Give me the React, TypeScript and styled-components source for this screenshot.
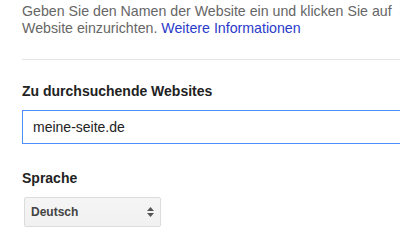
import React from 'react';
import styled, { createGlobalStyle } from 'styled-components';

const GlobalStyle = createGlobalStyle`
  html, body {
    margin: 0;
    padding: 0;
    background: #fff;
    overflow: hidden;
  }
  body {
    font-family: Arial, "Liberation Sans", sans-serif;
  }
`;

const Page = styled.div`
  width: 400px;
  height: 250px;
  overflow: hidden;
  padding-left: 22px;
  box-sizing: border-box;
`;

const Intro = styled.p`
  margin: 0;
  padding-top: 3px;
  width: 400px;
  font-size: 14.2px;
  line-height: 17px;
  color: #666;
  white-space: nowrap;
`;

const Link = styled.a`
  color: #2a3acb;
  text-decoration: none;
`;

const Divider = styled.hr`
  margin: 22px 0 0;
  border: 0;
  border-top: 1px solid #e5e5e5;
  width: 400px;
`;

const Field = styled.div<{ $top: number }>`
  display: flex;
  flex-direction: column;
  align-items: flex-start;
  padding-top: ${(p) => p.$top}px;
`;

const Label = styled.label`
  font-size: 14px;
  line-height: 16px;
  font-weight: bold;
  color: #222;
  margin-bottom: 11px;
`;

const TextInput = styled.div`
  width: 400px;
  height: 34px;
  box-sizing: border-box;
  border: 1px solid #4d90fe;
  display: flex;
  align-items: center;
  padding-left: 10px;
  font-size: 14px;
  color: #222;
`;

const Select = styled.div`
  margin-left: 2px;
  width: 137px;
  height: 30px;
  box-sizing: border-box;
  border: 1px solid #dcdcdc;
  border-radius: 2px;
  background: linear-gradient(#f5f5f5, #f1f1f1);
  display: flex;
  align-items: center;
  justify-content: space-between;
  padding: 0 6px 0 6px;
  font-size: 12px;
  font-weight: bold;
  color: #444;
`;

const Arrows = () => (
  <svg width="7" height="10" viewBox="0 0 7 10">
    <path d="M3.5 0 L7 4 L0 4 Z" fill="#555" />
    <path d="M3.5 10 L7 6 L0 6 Z" fill="#555" />
  </svg>
);

export default function App() {
  return (
    <>
      <GlobalStyle />
      <Page>
        <Intro>
          Geben Sie den Namen der Website ein und klicken Sie auf
          <br />
          Website einzurichten. <Link href="#">Weitere Informationen</Link>
        </Intro>
        <Divider />
        <Field $top={23}>
          <Label>Zu durchsuchende Websites</Label>
          <TextInput>meine-seite.de</TextInput>
        </Field>
        <Field $top={26}>
          <Label>Sprache</Label>
          <Select>
            <span>Deutsch</span>
            <Arrows />
          </Select>
        </Field>
      </Page>
    </>
  );
}
